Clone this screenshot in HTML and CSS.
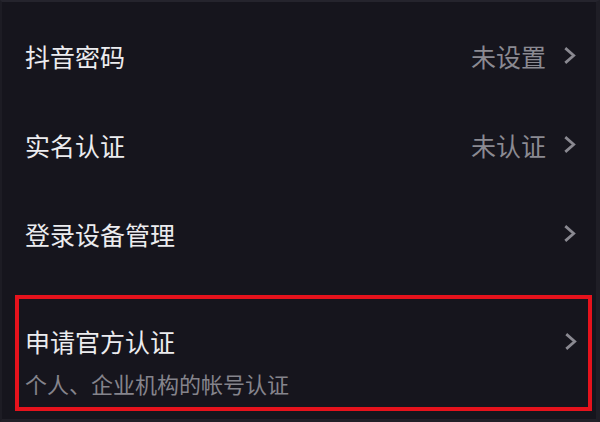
FILE: index.html
```html
<!DOCTYPE html>
<html lang="zh-CN">
<head>
  <meta charset="UTF-8" />
  <meta name="viewport" content="width=device-width, initial-scale=1.0"/>
  <title>账号与安全</title>
  <link rel="stylesheet" href="styles.css">
</head>
<body>
  <div class="screen">
    <div class="row">
      <span class="label">抖音密码</span>
      <span class="value">未设置</span>
      <svg class="chevron" viewBox="0 0 12 18"><path d="M2 2 L10 9 L2 16" /></svg>
    </div>
    <div class="row">
      <span class="label">实名认证</span>
      <span class="value">未认证</span>
      <svg class="chevron" viewBox="0 0 12 18"><path d="M2 2 L10 9 L2 16" /></svg>
    </div>
    <div class="row">
      <span class="label">登录设备管理</span>
      <svg class="chevron" viewBox="0 0 12 18"><path d="M2 2 L10 9 L2 16" /></svg>
    </div>

    <div class="highlight">
      <div class="highlight-head">
        <span class="label">申请官方认证</span>
        <svg class="chevron" viewBox="0 0 12 18"><path d="M2 2 L10 9 L2 16" /></svg>
      </div>
      <div class="sub">个人、企业机构的帐号认证</div>
    </div>
  </div>
</body>
</html>
```

FILE: styles.css
```css
* {
  box-sizing: border-box;
}

body {
  margin: 0;
  background: #16151d;
  font-family: "Noto Sans CJK SC", "Noto Sans", sans-serif;
}

.screen {
  width: 600px;
  height: 422px;
  padding-top: 10px;
  border-top: 2px solid #25242d;
  border-left: 2px solid #1d1c24;
  border-right: 4px solid #1f1e26;
  border-bottom: 3px solid #212028;
}

.row {
  display: flex;
  align-items: center;
  height: 91px;
  padding: 0 20px 0 23px;
  margin-top: -2px;
}

.label {
  flex: 1;
  color: #ececef;
  font-size: 25px;
  line-height: 30px;
}

.value {
  color: #8b8a92;
  font-size: 25px;
  line-height: 30px;
  margin-right: 17px;
}

.chevron {
  width: 13px;
  height: 19px;
  fill: none;
  stroke: #8a8991;
  stroke-width: 2.6;
}

.highlight {
  margin: 16px 4px 0 13px;
  border: 4px solid #e6121c;
  padding: 27px 11px 11px 6px;
}

.highlight-head {
  display: flex;
  align-items: center;
}

.sub {
  margin-top: 14px;
  color: #85848c;
  font-size: 22px;
  line-height: 26px;
}
```
